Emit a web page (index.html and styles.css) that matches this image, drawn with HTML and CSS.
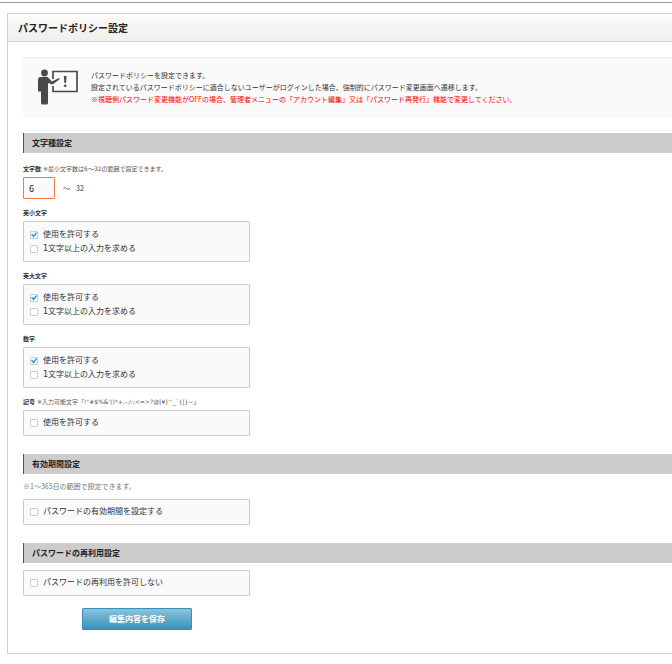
FILE: index.html
```html
<!DOCTYPE html>
<html lang="ja">
<head>
<meta charset="utf-8">
<title>パスワードポリシー設定</title>
<link rel="stylesheet" href="styles.css">
</head>
<body>
<main class="panel">
  <h1 class="panel-title">パスワードポリシー設定</h1>
  <form class="panel-body">
    <div class="info">
      <svg class="info-icon" viewBox="0 0 42 36" aria-hidden="true">
        <circle cx="7.5" cy="4" r="3.4" fill="#4a4a4a"/>
        <path d="M3.500 8h7l4.500 4.500 7-3.500.6 1.200-7 5.300-4.600-1.500V34q0 1.500-1.500 1.500H5.500Q4 35.500 4 34V22.500H1V11q0-3 2.500-3z" fill="#4a4a4a"/>
        <path d="M16 10V2.500H40V22.500H16V17" fill="none" stroke="#4a4a4a" stroke-width="1.700"/>
        <path d="M26.800 7h2.800l-.6 7h-1.600z" fill="#4a4a4a"/>
        <circle cx="28.200" cy="16.800" r="1.300" fill="#4a4a4a"/>
      </svg>
      <div class="info-text">
        <p>パスワードポリシーを設定できます。</p>
        <p>設定されているパスワードポリシーに適合しないユーザーがログインした場合、強制的にパスワード変更画面へ遷移します。</p>
        <p class="warning">※視聴側パスワード変更機能がOFFの場合、管理者メニューの「アカウント編集」又は「パスワード再発行」機能で変更してください。</p>
      </div>
    </div>

    <section class="section">
      <h2 class="section-title">文字種設定</h2>
      <div class="field">
        <label class="field-label" for="min-length">文字数 <span class="hint">※最小文字数は6～32の範囲で設定できます。</span></label>
        <div class="range">
          <input class="length-input" id="min-length" type="text" value="6">
          <span>～</span><span>32</span>
        </div>
      </div>
      <fieldset class="field">
        <legend class="field-label">英小文字</legend>
        <div class="options">
          <label class="option"><input type="checkbox" checked>使用を許可する</label>
          <label class="option"><input type="checkbox">1文字以上の入力を求める</label>
        </div>
      </fieldset>
      <fieldset class="field">
        <legend class="field-label">英大文字</legend>
        <div class="options">
          <label class="option"><input type="checkbox" checked>使用を許可する</label>
          <label class="option"><input type="checkbox">1文字以上の入力を求める</label>
        </div>
      </fieldset>
      <fieldset class="field">
        <legend class="field-label">数字</legend>
        <div class="options">
          <label class="option"><input type="checkbox" checked>使用を許可する</label>
          <label class="option"><input type="checkbox">1文字以上の入力を求める</label>
        </div>
      </fieldset>
      <fieldset class="field">
        <legend class="field-label">記号 <span class="hint">※入力可能文字「!"#$%&amp;'()*+,-./:;&lt;=&gt;?@[¥]^_`{|}~」</span></legend>
        <div class="options single">
          <label class="option"><input type="checkbox">使用を許可する</label>
        </div>
      </fieldset>
    </section>

    <section class="section">
      <h2 class="section-title">有効期間設定</h2>
      <p class="note">※1～365日の範囲で設定できます。</p>
      <div class="options single">
        <label class="option"><input type="checkbox">パスワードの有効期間を設定する</label>
      </div>
    </section>

    <section class="section">
      <h2 class="section-title">パスワードの再利用設定</h2>
      <div class="options single">
        <label class="option"><input type="checkbox">パスワードの再利用を許可しない</label>
      </div>
    </section>

    <button class="save" type="button">編集内容を保存</button>
  </form>
</main>
</body>
</html>
```
FILE: styles.css
```css
* {
  box-sizing: border-box;
}

body {
  margin: 2px 0 0;
  border-top: 1px solid #999;
  background: #fff;
  color: #333;
  font-family: "Noto Sans CJK JP", sans-serif;
  font-size: 8px;
}

h1, h2, p, fieldset {
  margin: 0;
}

fieldset {
  min-width: 0;
  padding: 0;
  border: 0;
}

legend {
  padding: 0;
}

.panel {
  margin: 10px 0 11px 7px;
  border: 1px solid #d0d0d0;
  border-right: 0;
}

.panel-title {
  padding: 0 10px;
  border-bottom: 1px solid #d0d0d0;
  background: linear-gradient(#fbfbfa, #f0efeb);
  color: #222;
  font-size: 10px;
  line-height: 27px;
}

.panel-body {
  padding: 15px 0 23px 15px;
}

.info {
  display: flex;
  align-items: flex-start;
  gap: 12px;
  margin-bottom: 15px;
  padding: 11px 14px 13px;
  border-top: 1px solid #eee;
  background: #fafafa;
}

.info-icon {
  flex: none;
  width: 42px;
  height: 36px;
}

.info-text {
  font-size: 7px;
  line-height: 12px;
}

.warning {
  color: #f00;
}

.section {
  margin-bottom: 18px;
}

.section-title {
  margin-bottom: 7px;
  padding-left: 8px;
  border-left: 1px solid #555;
  background: #ccc;
  color: #222;
  font-size: 8px;
  line-height: 20px;
}

.section-title + .field {
  margin-top: 12px;
}

.field {
  margin-bottom: 10px;
}

.field-label {
  display: block;
  margin-bottom: 4px;
  font-family: "DejaVu Sans", "Noto Sans CJK JP", sans-serif;
  font-size: 6px;
  font-weight: 700;
  line-height: 8px;
}

.hint {
  color: #555;
  font-weight: 400;
}

.range {
  display: flex;
  align-items: center;
  gap: 6px;
  font-size: 7px;
}

.length-input {
  width: 32px;
  height: 22px;
  margin-right: 2px;
  padding: 0 5px;
  border: 1px solid #f47c42;
  border-radius: 1px;
  outline: 0;
  background: #fafafa;
  color: #222;
  font-family: inherit;
  font-size: 9px;
}

.options {
  max-width: 227px;
  padding: 6px 6px 5px;
  border: 1px solid #ccc;
  border-radius: 1px;
  background: #fafafa;
}

.single {
  padding: 5px 6px;
}

.option {
  display: flex;
  align-items: center;
  gap: 5px;
  font-family: "DejaVu Sans", "Noto Sans CJK JP", sans-serif;
  line-height: 14px;
}

.option input {
  appearance: none;
  position: relative;
  width: 8px;
  height: 8px;
  margin: 0;
  border: 1px solid #ccc;
  border-radius: 1px;
  background: #fff;
}

.option input:checked::after {
  content: "";
  position: absolute;
  inset: 0;
  background: #1b9fe0;
  clip-path: polygon(0 45%, 20% 30%, 42% 55%, 85% 0, 100% 18%, 45% 95%);
}

.note {
  margin-bottom: 8px;
  color: #777;
  font-size: 7px;
  line-height: 10px;
}

.save {
  display: block;
  width: 110px;
  height: 22px;
  margin: -6px 0 0 59px;
  padding: 0;
  border: 1px solid #3592bd;
  border-radius: 1px;
  background: linear-gradient(#8cc3dc, #3592be);
  color: #fff;
  font-family: inherit;
  font-size: 8px;
  font-weight: 700;
  line-height: 18px;
}
```
